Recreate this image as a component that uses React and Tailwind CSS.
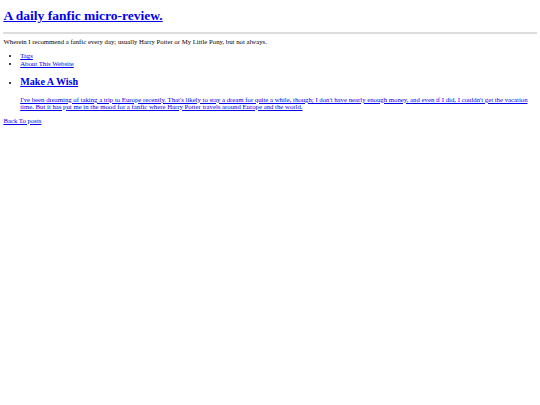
export default function App() {
  const link = 'text-[#0000ee] underline'
  return (
    <div className="min-h-screen bg-white px-[3.4px] pt-[7.6px] text-black" style={{ fontFamily: '"Liberation Serif", "Times New Roman", serif' }}>
      <h1 className="text-[13.5px] font-bold leading-[normal]">
        <a href="#" className={link}>A daily fanfic micro-review.</a>
      </h1>
      <hr className="mt-[8.4px] h-[2px] border-0 bg-[#dddddd]" />
      <p className="text-[6.75px] leading-[normal] mt-[4.3px]">
        Wherein I recommend a fanfic every day; usually Harry Potter or My Little Pony, but not always.
      </p>
      <ul className="list-disc pl-[16.8px] text-[6.75px] leading-[8px] mt-[7.2px]">
        <li><a href="#" className={link}>Tags</a></li>
        <li><a href="#" className={link}>About This Website</a></li>
      </ul>
      <ul className="list-disc pl-[16.8px] text-[6.75px] leading-[normal] mt-[8px]">
        <li>
          <h2 className="text-[10.1px] font-bold leading-[normal] mb-[8.4px]">
            <a href="#" className={link}>Make A Wish</a>
          </h2>
          <p>
            <a href="#" className={link}>
              I've been dreaming of taking a trip to Europe recently. That's likely to stay a dream for quite a while, though; I don't have nearly enough money, and even if I did, I couldn't get the vacation time. But it has put me in the mood for a fanfic where Harry Potter travels around Europe and the world.
            </a>
          </p>
        </li>
      </ul>
      <p className="text-[6.75px] leading-[normal] mt-[6.75px]">
        <a href="#" className={link}>Back To posts</a>
      </p>
    </div>
  )
}
